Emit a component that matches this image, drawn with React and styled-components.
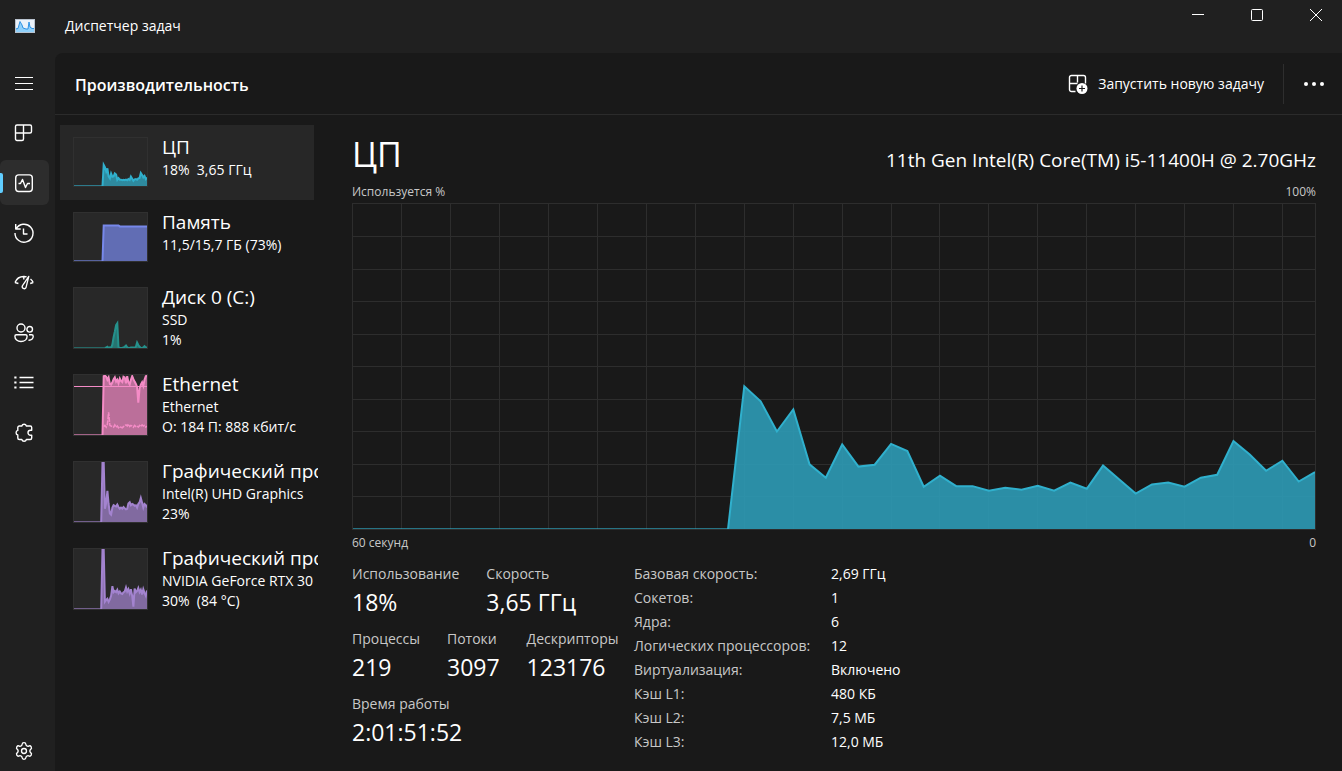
import React from 'react';
import styled, { createGlobalStyle } from 'styled-components';
import { Settings } from 'lucide-react';

const SAMPLES = 60;
const idle = (count) => Array(count).fill(0);

const cpuData = [
  ...idle(24), 43.9, 39.3, 30, 36.8, 19.9, 15.8, 26, 19.2, 19.8, 26.2, 24, 13,
  16.4, 13.2, 13.2, 11.8, 12.7, 12.1, 13.3, 11.8, 14.3, 12.4, 19.5, 15.2, 10.9,
  13.7, 14.3, 13, 15.8, 16.7, 27.1, 22.9, 17.9, 21, 14.6, 17.5,
];
const memoryData = [...idle(24), ...Array(13).fill(74), ...Array(23).fill(72)];
const diskData = [
  ...idle(26), 1, 2, 0, 1, 0, 6, 18, 27, 38, 41, 1, 0, 0, 0, 1, 2, 4, 1, 0, 0,
  1, 1, 1, 0, 2, 9, 5, 2, 0, 0, 1, 3, 1, 1,
];
const ethernetData = [
  ...idle(24), 98, 99, 97, 92, 96, 85, 84, 88, 93, 96, 89, 92, 86, 94, 90, 88,
  97, 96, 86, 98, 88, 84, 92, 98, 93, 89, 85, 80, 54, 78, 84, 88, 82, 92, 98, 99,
];
const ethernetSendData = [
  ...idle(24), 14, 16, 13, 18, 38, 16, 15, 14, 13, 17, 13, 15, 12, 14, 13, 12,
  14, 16, 17, 15, 18, 14, 16, 15, 13, 16, 14, 15, 13, 16, 14, 17, 15, 16, 13, 15,
];
const intelData = [
  ...idle(23), 100, 100, 22, 32, 52, 30, 14, 12, 24, 28, 27, 26, 29, 25, 22, 24, 22,
  25, 23, 21, 22, 31, 33, 28, 30, 29, 27, 28, 24, 30, 33, 40, 32, 24, 30, 28, 24,
];
const nvidiaData = [
  ...idle(23), 100, 100, 12, 15, 17, 12, 16, 22, 38, 28, 30, 28, 32, 26, 29, 26,
  25, 28, 29, 36, 29, 33, 26, 33, 22, 4, 34, 28, 30, 35, 28, 32, 24, 33, 27, 22, 31,
];

const toPoints = (data, width, height) =>
  data.map((value, i) => {
    const x = (i * width) / (SAMPLES - 1);
    const y = height - (value / 100) * height;
    return `${x.toFixed(1)},${y.toFixed(1)}`;
  });

// The stretch without samples is drawn as a dim base line, the rest as a filled area.
const Area = ({ data, width, height, color, fill = color, opacity = 0.72 }) => {
  const start = data.findIndex((value) => value > 0) - 1;
  const points = toPoints(data, width, height).slice(start);
  const startX = points[0].split(',')[0];
  return (
    <>
      <path
        d={`M0 ${height - 0.5}H${startX}`}
        stroke={color}
        strokeOpacity="0.6"
        vectorEffect="non-scaling-stroke"
      />
      <polygon
        points={`${startX},${height} ${points.join(' ')} ${width},${height}`}
        fill={fill}
        fillOpacity={opacity}
      />
      <polyline
        points={points.join(' ')}
        fill="none"
        stroke={color}
        strokeWidth="2"
        vectorEffect="non-scaling-stroke"
      />
    </>
  );
};

const Thumbnail = ({ device }) => {
  const { data, color, tall, extra, limit } = device;
  const width = 73;
  const height = tall ? 60 : 48;
  return (
    <Thumb $tall={tall} viewBox={`0 0 ${width} ${height}`} preserveAspectRatio="none" aria-hidden="true">
      <Area data={data} width={width} height={height} color={color} />
      {extra && (
        <polyline
          points={toPoints(extra, width, height).slice(24).join(' ')}
          fill="none"
          stroke={color}
          strokeWidth="1.5"
          strokeDasharray="5 1"
        />
      )}
      {limit && <path d={`M0 ${limit}H${width}`} stroke={color} />}
    </Thumb>
  );
};

const UsageChart = () => {
  const width = 964;
  const height = 326;
  const columns = Array.from({ length: 19 }, (_, i) => ((i + 1) * 3 * width) / (SAMPLES - 1));
  const rows = Array.from({ length: 9 }, (_, i) => ((i + 1) * height) / 10);
  return (
    <Chart viewBox={`0 0 ${width} ${height}`} preserveAspectRatio="none" aria-hidden="true">
      <g stroke="#2d2d2d" shapeRendering="crispEdges">
        {columns.map((x) => (
          <path key={x} d={`M${x} 0V${height}`} vectorEffect="non-scaling-stroke" />
        ))}
        {rows.map((y) => (
          <path key={y} d={`M0 ${y}H${width}`} vectorEffect="non-scaling-stroke" />
        ))}
      </g>
      <Area data={cpuData} width={width} height={height} color="#30b0cd" fill="#2d98b1" opacity={0.93} />
    </Chart>
  );
};

const MenuIcon = () => (
  <Icon viewBox="0 0 20 20">
    <path d="M1 4.500h18M1 10.500h18M1 16.500h18" strokeWidth="1.200" />
  </Icon>
);

const ProcessesIcon = () => (
  <Icon viewBox="0 0 20 20">
    <path d="M3 2h13a1.500 1.500 0 0 1 1.500 1.500v5a1.500 1.500 0 0 1-1.500 1.500h-6.500v6a1.500 1.500 0 0 1-1.500 1.500h-5a1.500 1.500 0 0 1-1.500-1.500v-12.500a1.500 1.500 0 0 1 1.500-1.500zM9.500 2v8M1.500 10h8" />
  </Icon>
);

const PerformanceIcon = () => (
  <Icon viewBox="0 0 20 20">
    <rect x="1.700" y="1.900" width="16.600" height="16.600" rx="3" />
    <path d="M4.500 10.500h2l2-4 3 8 2-4h2.500" />
  </Icon>
);

const HistoryIcon = () => (
  <Icon viewBox="0 0 20 20">
    <path d="M1.700 1v5h5M2 6.100A9 9 0 1 1 1 10" />
    <path d="M9.500 5.500v5.500h4" />
  </Icon>
);

const StartupIcon = () => (
  <Icon viewBox="0 0 20 20">
    <path d="M1 9.500a9.500 9.500 0 0 1 9-6q1.500 0 2.600.4M16.500 6a9.500 9.500 0 0 1 2.700 3.500M1 9.500l3.400 1M19.200 9.500l-3 1M9.800 3.500v3" />
    <path d="M14.800 3.300L8.500 12.600a2 2 0 1 0 3.500 2z" strokeWidth="1.300" />
  </Icon>
);

const UsersIcon = () => (
  <Icon viewBox="0 0 20 20">
    <circle cx="7" cy="5" r="4" />
    <circle cx="15.700" cy="6.300" r="2.800" />
    <path d="M2.400 11.700h9.200a1.500 1.500 0 0 1 1.500 1.500c0 3.200-2.600 5.300-6.100 5.300s-6.100-2.100-6.100-5.300a1.500 1.500 0 0 1 1.500-1.500z" />
    <path d="M15 11.700h2.700a1.500 1.500 0 0 1 1.500 1.500c0 2.600-1.800 4.200-4.700 4" />
  </Icon>
);

const DetailsIcon = () => (
  <Icon viewBox="0 0 20 20">
    <path d="M5.500 4.500h14M5.500 9.500h14M5.500 14.500h14" />
    <path d="M.3 4.500h2.200M.3 9.500h2.200M.3 14.500h2.200" strokeWidth="2.200" />
  </Icon>
);

const ServicesIcon = () => (
  <Icon viewBox="0 0 20 20">
    <path d="M5.300 3h2.500a2.400 2.400 0 0 1 4.600 0h3.800a1.500 1.500 0 0 1 1.500 1.500v2.700h-1.200a2.500 2.500 0 0 0 0 5h1.200v2.800a1.500 1.500 0 0 1-1.500 1.500h-3.800a2.400 2.400 0 0 1-4.600 0h-2.500a1.500 1.500 0 0 1-1.500-1.500v-3a2.400 2.400 0 0 1 0-4.600v-2.900a1.500 1.500 0 0 1 1.500-1.500z" />
  </Icon>
);

const NewTaskIcon = () => (
  <Icon viewBox="0 0 20 20">
    <path d="M7.500 17.500h-4a2 2 0 0 1-2-2v-12a2 2 0 0 1 2-2h12a2 2 0 0 1 2 2v6M9.500 1.500v7M1.500 9.500h8" />
    <circle cx="14" cy="14.500" r="5.500" fill="#fff" stroke="none" />
    <path d="M14 11.500v6M11 14.500h6" stroke="#191919" strokeWidth="1.200" />
  </Icon>
);

const AppLogo = () => (
  <Logo viewBox="0 0 20 14" aria-hidden="true">
    <rect width="20" height="14" fill="#b9c3cf" />
    <rect x="1" y="1" width="18" height="12" fill="#eaf1f9" />
    <path d="M1 9l2 0 2-6 2 3 1 3 3 1 2 0 1-7 1 5 2 1 2 0v4H1z" fill="#8fd0fa" />
    <path d="M1 10l2-.5 2-7 2 3.500 1 3 3 1h2l1-7 1 5 2 1.500h2" fill="none" stroke="#2f92e4" />
  </Logo>
);

const pages = [
  { name: 'Процессы', icon: ProcessesIcon },
  { name: 'Производительность', icon: PerformanceIcon, active: true },
  { name: 'Журнал приложений', icon: HistoryIcon },
  { name: 'Автозагрузка приложений', icon: StartupIcon },
  { name: 'Пользователи', icon: UsersIcon },
  { name: 'Подробности', icon: DetailsIcon },
  { name: 'Службы', icon: ServicesIcon },
];

const devices = [
  { id: 'cpu', name: 'ЦП', lines: ['18%\u00a0 3,65 ГГц'], data: cpuData, color: '#30b0cd', active: true },
  { id: 'memory', name: 'Память', lines: ['11,5/15,7 ГБ (73%)'], data: memoryData, color: '#7788ea' },
  { id: 'disk', name: 'Диск 0 (C:)', lines: ['SSD', '1%'], data: diskData, color: '#25918c', tall: true },
  {
    id: 'ethernet',
    name: 'Ethernet',
    lines: ['Ethernet', 'О: 184 П: 888 кбит/с'],
    data: ethernetData,
    extra: ethernetSendData,
    limit: 11.5,
    color: '#f48bc6',
    tall: true,
  },
  {
    id: 'gpu0',
    name: 'Графический процессор',
    lines: ['Intel(R) UHD Graphics', '23%'],
    data: intelData,
    color: '#a383cf',
    tall: true,
  },
  {
    id: 'gpu1',
    name: 'Графический процессор',
    lines: ['NVIDIA GeForce RTX 30', '30%\u00a0 (84 °C)'],
    data: nvidiaData,
    color: '#a383cf',
    tall: true,
  },
];

const stats = [
  [
    { label: 'Использование', value: '18%' },
    { label: 'Скорость', value: '3,65 ГГц' },
  ],
  [
    { label: 'Процессы', value: '219' },
    { label: 'Потоки', value: '3097' },
    { label: 'Дескрипторы', value: '123176' },
  ],
  [{ label: 'Время работы', value: '2:01:51:52' }],
];

const specs = [
  ['Базовая скорость:', '2,69 ГГц'],
  ['Сокетов:', '1'],
  ['Ядра:', '6'],
  ['Логических процессоров:', '12'],
  ['Виртуализация:', 'Включено'],
  ['Кэш L1:', '480 КБ'],
  ['Кэш L2:', '7,5 МБ'],
  ['Кэш L3:', '12,0 МБ'],
];

const App = () => {
  return (
    <Window>
      <GlobalStyle />
      <TitleBar>
        <AppLogo />
        <AppName>Диспетчер задач</AppName>
        <WindowControls>
          <WindowButton aria-label="Свернуть">
            <ControlIcon viewBox="0 0 12 12">
              <path d="M0 5.500h12" />
            </ControlIcon>
          </WindowButton>
          <WindowButton aria-label="Развернуть">
            <ControlIcon viewBox="0 0 12 12">
              <rect x="0.500" y="0.500" width="11" height="11" rx="1" />
            </ControlIcon>
          </WindowButton>
          <WindowButton aria-label="Закрыть">
            <ControlIcon viewBox="0 0 12 12">
              <path d="M0 0l12 12M12 0L0 12" />
            </ControlIcon>
          </WindowButton>
        </WindowControls>
      </TitleBar>

      <Body>
        <Rail>
          <RailButton aria-label="Меню">
            <MenuIcon />
          </RailButton>
          {pages.map(({ name, icon: PageIcon, active }) => (
            <RailButton key={name} aria-label={name} $active={active}>
              <PageIcon />
            </RailButton>
          ))}
          <SettingsButton aria-label="Параметры">
            <Settings size={20} strokeWidth={1.6} />
          </SettingsButton>
        </Rail>

        <Main>
          <PageHeader>
            <PageTitle>Производительность</PageTitle>
            <NewTaskButton>
              <NewTaskIcon />
              Запустить новую задачу
            </NewTaskButton>
            <MoreButton aria-label="Ещё">
              <Dots viewBox="0 0 20 4">
                <circle cx="2" cy="2" r="2" />
                <circle cx="10" cy="2" r="2" />
                <circle cx="18" cy="2" r="2" />
              </Dots>
            </MoreButton>
          </PageHeader>

          <Content>
            <DeviceList>
              {devices.map((device) => (
                <Device key={device.id} $active={device.active} $tall={device.tall}>
                  <Thumbnail device={device} />
                  <DeviceText>
                    <DeviceName>{device.name}</DeviceName>
                    {device.lines.map((line) => (
                      <DeviceLine key={line}>{line}</DeviceLine>
                    ))}
                  </DeviceText>
                </Device>
              ))}
            </DeviceList>

            <Details>
              <DetailsHeader>
                <DetailsTitle>ЦП</DetailsTitle>
                <Model>11th Gen Intel(R) Core(TM) i5-11400H @ 2.70GHz</Model>
              </DetailsHeader>
              <AxisLabels>
                <span>Используется %</span>
                <span>100%</span>
              </AxisLabels>
              <UsageChart />
              <AxisLabels>
                <span>60 секунд</span>
                <span>0</span>
              </AxisLabels>
              <Summary>
                <Stats>
                  {stats.map((row) => (
                    <StatRow key={row[0].label}>
                      {row.map(({ label, value }) => (
                        <div key={label}>
                          <StatLabel>{label}</StatLabel>
                          <StatValue>{value}</StatValue>
                        </div>
                      ))}
                    </StatRow>
                  ))}
                </Stats>
                <Specs>
                  <tbody>
                    {specs.map(([label, value]) => (
                      <tr key={label}>
                        <SpecLabel scope="row">{label}</SpecLabel>
                        <SpecValue>{value}</SpecValue>
                      </tr>
                    ))}
                  </tbody>
                </Specs>
              </Summary>
            </Details>
          </Content>
        </Main>
      </Body>
    </Window>
  );
};

export default App;

const GlobalStyle = createGlobalStyle`
  * {
    box-sizing: border-box;
  }

  body {
    margin: 0;
    background: #202020;
    color: #fff;
    font-family: 'Open Sans', 'Noto Sans', sans-serif;
    font-size: 14px;
  }

  button {
    border: none;
    padding: 0;
    background: none;
    color: inherit;
    font: inherit;
    cursor: pointer;
  }
`;

const Window = styled.div`
  display: flex;
  flex-direction: column;
  min-height: 100vh;
`;

const TitleBar = styled.header`
  display: flex;
  align-items: center;
  height: 53px;
  padding: 0 0 2px 15px;
`;

const Logo = styled.svg`
  width: 20px;
  height: 14px;
`;

const AppName = styled.span`
  margin-left: 30px;
`;

const WindowControls = styled.div`
  display: flex;
  align-self: flex-start;
  gap: 6px;
  margin-left: auto;
`;

const WindowButton = styled.button`
  display: flex;
  align-items: center;
  justify-content: center;
  width: 53px;
  height: 30px;

  &:hover {
    background: #2d2d2d;
  }
`;

const ControlIcon = styled.svg`
  width: 12px;
  height: 12px;
  fill: none;
  stroke: #fff;
`;

const Body = styled.div`
  display: flex;
  flex: 1;
`;

const Rail = styled.nav`
  display: flex;
  flex-direction: column;
  gap: 5px;
  width: 55px;
  padding-top: 7px;
`;

const RailButton = styled.button`
  position: relative;
  display: flex;
  align-items: center;
  justify-content: center;
  width: 49px;
  height: 45px;
  padding-right: 1px;
  border-radius: 6px;
  background: ${({ $active }) => ($active ? '#2d2d2d' : 'transparent')};

  &:hover {
    background: #2d2d2d;
  }

  &::before {
    content: '';
    display: ${({ $active }) => ($active ? 'block' : 'none')};
    position: absolute;
    left: 0;
    width: 3px;
    height: 20px;
    border-radius: 0 2px 2px 0;
    background: #60cdff;
  }
`;

const SettingsButton = styled(RailButton)`
  height: 40px;
  margin-top: auto;
`;

const Icon = styled.svg`
  width: 20px;
  height: 20px;
  overflow: visible;
  fill: none;
  stroke: #fff;
  stroke-width: 1.4;
  stroke-linejoin: round;
`;

const Main = styled.main`
  display: flex;
  flex: 1;
  flex-direction: column;
  min-width: 0;
  border-radius: 8px 0 0 0;
  background: #191919;
`;

const PageHeader = styled.div`
  display: flex;
  align-items: center;
  height: 62px;
  padding-left: 20px;
  border-bottom: 1px solid #2b2b2b;
`;

const PageTitle = styled.h1`
  flex: 1;
  margin: 0;
  padding-top: 2px;
  font-size: 16px;
  font-weight: 600;
`;

const NewTaskButton = styled.button`
  display: flex;
  align-items: center;
  gap: 10px;
  height: 40px;
  padding-right: 19px;
  border-right: 1px solid #2e2e2e;
`;

const MoreButton = styled.button`
  display: flex;
  align-items: center;
  justify-content: center;
  width: 58px;
  height: 40px;
  padding-left: 2px;
`;

const Dots = styled.svg`
  width: 20px;
  height: 4px;
  fill: #fff;
`;

const Content = styled.div`
  display: flex;
  flex: 1;
`;

const DeviceList = styled.div`
  flex: none;
  width: 258px;
  margin-left: 5px;
  padding-top: 10px;
  overflow: hidden;
`;

const Device = styled.button`
  display: flex;
  align-items: flex-start;
  gap: 14px;
  width: 254px;
  height: ${({ $tall }) => ($tall ? '87px' : '75px')};
  padding-left: 13px;
  background: ${({ $active }) => ($active ? '#272727' : 'transparent')};
  text-align: left;
  white-space: nowrap;

  &:hover {
    background: #272727;
  }
`;

const Thumb = styled.svg`
  flex: none;
  width: 75px;
  height: ${({ $tall }) => ($tall ? '62px' : '50px')};
  margin-top: 12px;
  border: 1px solid #303030;
  background: #282828;
`;

const DeviceText = styled.span`
  display: flex;
  flex-direction: column;
  padding-top: 9px;
`;

const DeviceName = styled.span`
  font-size: 19px;
  line-height: 26px;
`;

const DeviceLine = styled.span`
  line-height: 20px;
`;

const Details = styled.section`
  display: flex;
  flex: 1;
  flex-direction: column;
  min-width: 0;
  padding: 15px 26px 17px 34px;
`;

const DetailsHeader = styled.div`
  display: flex;
  align-items: baseline;
  justify-content: space-between;
  margin-bottom: 4px;
`;

const DetailsTitle = styled.h2`
  margin: 0;
  font-size: 34px;
  font-weight: 400;
  line-height: 48px;
`;

const Model = styled.span`
  font-size: 19px;
`;

const AxisLabels = styled.div`
  display: flex;
  justify-content: space-between;
  color: #c8c8c8;
  font-size: 12px;
  line-height: 20px;
`;

const Chart = styled.svg`
  display: block;
  flex: 1 1 240px;
  width: 100%;
  min-height: 240px;
  margin: 1px 0 3px;
  border: 1px solid #2d2d2d;
`;

const Summary = styled.div`
  display: flex;
  margin-top: 9px;
`;

const Stats = styled.div`
  display: flex;
  flex-direction: column;
  gap: 9px;
  width: 282px;
`;

const StatRow = styled.div`
  display: flex;
  gap: 27px;
`;

const StatLabel = styled.div`
  color: #c8c8c8;
  line-height: 24px;
`;

const StatValue = styled.div`
  font-size: 23px;
  line-height: 32px;
`;

const Specs = styled.table`
  align-self: flex-start;
  border-collapse: collapse;
  line-height: 24px;
`;

const SpecLabel = styled.th`
  width: 197px;
  padding: 0;
  color: #c8c8c8;
  font-weight: 400;
  text-align: left;
`;

const SpecValue = styled.td`
  padding: 0;
`;
